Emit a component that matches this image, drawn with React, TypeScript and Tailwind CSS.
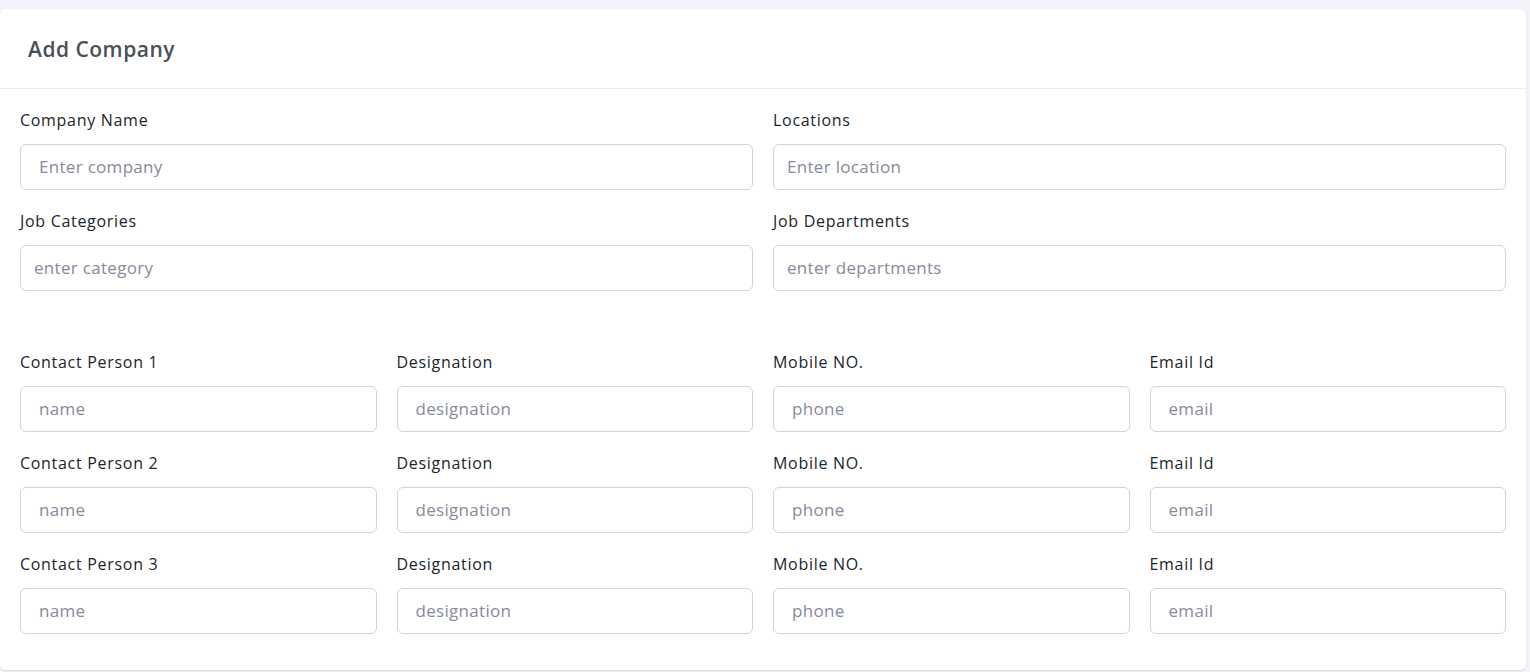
import React from 'react';

type Field = {
  label: string;
  placeholder: string;
  pad?: string;
};

const topFields: Field[] = [
  { label: 'Company Name', placeholder: 'Enter company', pad: 'pl-[18px]' },
  { label: 'Locations', placeholder: 'Enter location', pad: 'pl-[13px]' },
  { label: 'Job Categories', placeholder: 'enter category', pad: 'pl-[13px]' },
  { label: 'Job Departments', placeholder: 'enter departments', pad: 'pl-[13px]' },
];

const contactRow = (n: number): Field[] => [
  { label: `Contact Person ${n}`, placeholder: 'name' },
  { label: 'Designation', placeholder: 'designation' },
  { label: 'Mobile NO.', placeholder: 'phone' },
  { label: 'Email Id', placeholder: 'email' },
];

const FormField: React.FC<Field> = ({ label, placeholder, pad = 'pl-[18px]' }) => {
  return (
    <div className="flex flex-col">
      <label className="text-[16px] leading-[22px] font-medium tracking-[0.7px] text-[#212529] mb-[13px]">
        {label}
      </label>
      <input
        type="text"
        placeholder={placeholder}
        className={`h-[46px] w-full rounded-[6px] border border-[#ced4da] bg-white ${pad} pr-3 pb-[2px] text-[17px] tracking-[0.3px] text-[#212529] placeholder:text-[#878a99] outline-none`}
      />
    </div>
  );
};

export default function App() {
  return (
    <div
      className="min-h-[672px] bg-[#f3f3f9] pt-[9px] pr-[4px]"
      style={{ fontFamily: '"Open Sans", "Noto Sans", sans-serif' }}
    >
      <div className="rounded-[6px] bg-white shadow-[0_1px_2px_rgba(56,65,74,0.15)] h-[661px]">
        {/* Header */}
        <div className="h-[80px] flex items-center px-[28px] pt-[3px] border-b border-[#e9ebec]">
          <h4 className="text-[21px] font-semibold tracking-[0.5px] text-[#495057]">Add Company</h4>
        </div>

        {/* Body */}
        <div className="px-[20px] pt-[20px]">
          <div className="grid grid-cols-2 gap-x-[20px] gap-y-[20px]">
            {topFields.map((f) => (
              <FormField key={f.label} {...f} />
            ))}
          </div>

          <div className="mt-[60px] flex flex-col gap-y-[20px]">
            {[1, 2, 3].map((n) => (
              <div key={n} className="grid grid-cols-4 gap-x-[20px]">
                {contactRow(n).map((f) => (
                  <FormField key={f.label} {...f} />
                ))}
              </div>
            ))}
          </div>
        </div>
      </div>
    </div>
  );
}
